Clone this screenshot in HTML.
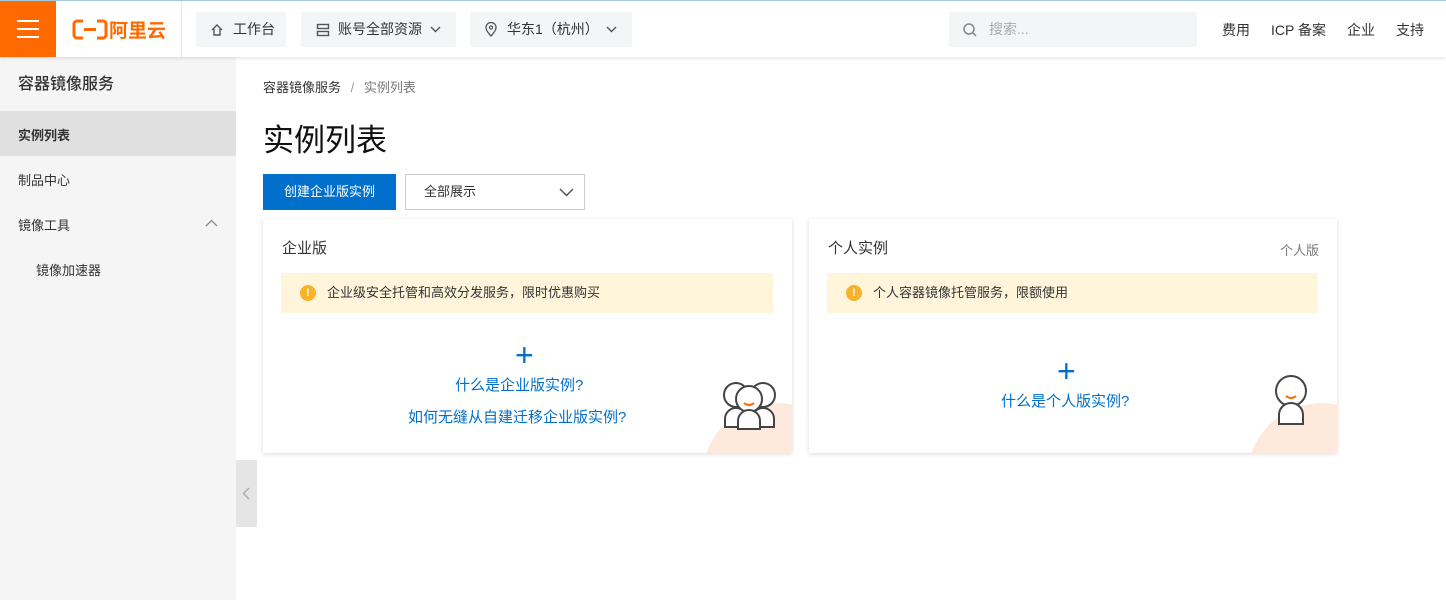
<!DOCTYPE html><html><head><meta charset="utf-8"><style>
*{box-sizing:border-box;margin:0;padding:0}
body{width:1446px;height:600px;overflow:hidden;font-family:"Liberation Sans","Noto Sans CJK SC",sans-serif;background:#fff;position:relative;color:#333}
.top{position:absolute;left:0;top:0;width:1446px;height:57px;background:#fff;border-top:1px solid #a8c8dc;box-shadow:0 1px 4px rgba(0,0,0,.12);z-index:3}
.ham{position:absolute;left:0;top:0;width:56px;height:56px;background:#ff6a00}
.ham i{position:absolute;left:17px;width:22px;height:2px;background:#fff}
.logo{position:absolute;left:56px;top:0;width:126px;height:56px;border-right:1px solid #e8e8e8}
.btn{position:absolute;top:11px;height:35px;background:#f4f5f7;border-radius:2px;font-size:14px;color:#333;line-height:35px}
.btn svg{position:absolute}
.side{position:absolute;left:0;top:57px;width:236px;height:543px;background:#f5f5f5}
.side div{font-size:13px;height:45px;line-height:45px;padding-left:18px;color:#333;position:relative}
a{color:#0070cc;text-decoration:none}
.card{position:absolute;top:219px;height:234px;background:#fff;box-shadow:0 1px 4px rgba(0,0,0,.15);overflow:hidden}
.card h3{position:absolute;left:19px;top:18px;font-size:15px;font-weight:normal;color:#333}
.warn{position:absolute;left:18px;right:19px;top:54px;height:40px;background:#fff5db;font-size:13px;line-height:40px;padding-left:46px;color:#333}
.warn:before{content:"!";position:absolute;left:19px;top:12px;width:16px;height:16px;border-radius:50%;background:#f7b32b;color:#fff;font-size:11px;line-height:16px;text-align:center;font-weight:bold}
.deco{position:absolute;right:-60px;bottom:-100px;width:150px;height:150px;border-radius:50%;background:#fdeadd}
.plus{position:absolute;font-size:32px;color:#0070cc;line-height:1}
</style></head><body>
<div class="top">
<div class="ham"><i style="top:19px"></i><i style="top:27px"></i><i style="top:35px"></i></div>
<div class="logo"><svg width="126" height="56"><rect x="18" y="20" width="14" height="17" rx="3" fill="none" stroke="#ff6a00" stroke-width="3"/><rect x="36" y="20" width="14" height="17" rx="3" fill="none" stroke="#ff6a00" stroke-width="3"/><rect x="27" y="18" width="14" height="21" fill="#fff"/><rect x="28" y="27" width="12" height="3" fill="#ff6a00"/><text x="53" y="36" font-size="19" font-weight="bold" fill="#ff6a00" font-family="Noto Sans CJK SC">阿里云</text></svg></div>
<div class="btn" style="left:196px;width:90px;padding-left:37px">工作台<svg style="left:14px;top:11px" width="14" height="14"><path d="M2 7L7 2l5 5M4 6v6h6V6" fill="none" stroke="#555" stroke-width="1.4"/></svg></div>
<div class="btn" style="left:301px;width:155px;padding-left:37px">账号全部资源<svg style="left:15px;top:11px" width="14" height="14"><rect x="1.5" y="1.5" width="11" height="4" fill="none" stroke="#555" stroke-width="1.4"/><rect x="1.5" y="8.5" width="11" height="4" fill="none" stroke="#555" stroke-width="1.4"/></svg><svg style="right:15px;top:13px" width="11" height="8"><path d="M1 2l4.5 4.5L10 2" fill="none" stroke="#555" stroke-width="1.4"/></svg></div>
<div class="btn" style="left:470px;width:162px;padding-left:37px">华东1（杭州）<svg style="left:14px;top:10px" width="14" height="16"><path d="M7 14s5-5 5-8.5a5 5 0 0 0-10 0C2 9 7 14 7 14z" fill="none" stroke="#555" stroke-width="1.3"/><circle cx="7" cy="5.5" r="1.6" fill="none" stroke="#555" stroke-width="1.2"/></svg><svg style="right:15px;top:13px" width="11" height="8"><path d="M1 2l4.5 4.5L10 2" fill="none" stroke="#555" stroke-width="1.4"/></svg></div>
<div class="btn" style="left:949px;width:248px;padding-left:40px;color:#aaa">搜索...<svg style="left:14px;top:11px" width="14" height="14"><circle cx="6" cy="6" r="5" fill="none" stroke="#888" stroke-width="1.5"/><line x1="10" y1="10" x2="13" y2="13" stroke="#888" stroke-width="1.5"/></svg></div>
<div style="position:absolute;top:19px;left:1222px;font-size:14px;color:#333">费用</div>
<div style="position:absolute;top:19px;left:1271px;font-size:14px;color:#333">ICP 备案</div>
<div style="position:absolute;top:19px;left:1347px;font-size:14px;color:#333">企业</div>
<div style="position:absolute;top:19px;left:1396px;font-size:14px;color:#333">支持</div>
</div>
<div class="side">
<div style="font-size:16px;height:54px;line-height:56px;font-weight:500">容器镜像服务</div>
<div style="background:#e0e0e0;font-weight:bold;line-height:50px">实例列表</div>
<div style="line-height:50px">制品中心</div>
<div style="line-height:50px">镜像工具<svg style="position:absolute;left:205px;top:18px" width="13" height="9"><path d="M1 7l5.5-5.5L12 7" fill="none" stroke="#888" stroke-width="1.3"/></svg></div>
<div style="padding-left:36px;line-height:50px">镜像加速器</div>
</div>
<div style="position:absolute;left:236px;top:460px;width:21px;height:67px;background:#e5e5e5"><svg style="position:absolute;left:6px;top:27px" width="8" height="13"><path d="M7 1L1.5 6.5 7 12" fill="none" stroke="#aaa" stroke-width="1.4"/></svg></div>
<div style="position:absolute;left:263px;top:77px;font-size:13px;color:#333">容器镜像服务 <span style="color:#999;margin:0 6px">/</span> <span style="color:#777">实例列表</span></div>
<div style="position:absolute;left:263px;top:115px;font-size:31px;color:#111">实例列表</div>
<div style="position:absolute;left:263px;top:174px;width:133px;height:36px;background:#0070cc;color:#fff;font-size:13px;line-height:36px;text-align:center">创建企业版实例</div>
<div style="position:absolute;left:405px;top:174px;width:180px;height:36px;border:1px solid #ccc;font-size:13px;line-height:34px;padding-left:18px">全部展示<svg style="position:absolute;right:10px;top:12px" width="15" height="10"><path d="M1 2l6.5 6.5L14 2" fill="none" stroke="#555" stroke-width="1.5"/></svg></div>
<div class="card" style="left:263px;width:529px">
<h3>企业版</h3><div class="warn">企业级安全托管和高效分发服务，限时优惠购买</div>
<div class="plus" style="left:252px;top:120px">+</div>
<a style="position:absolute;left:192px;top:155px;font-size:15px">什么是企业版实例?</a>
<a style="position:absolute;left:145px;top:187px;font-size:15px">如何无缝从自建迁移企业版实例?</a>
<div class="deco"></div>
<svg style="position:absolute;left:458px;top:160px" width="58" height="52"><g fill="#fff" stroke="#444" stroke-width="2"><circle cx="15" cy="16" r="12"/><path d="M4 48v-8a11 11 0 0 1 22 0v8z"/><circle cx="42" cy="16" r="12"/><path d="M31 48v-8a11 11 0 0 1 22 0v8z"/><circle cx="28" cy="20" r="13"/><path d="M17 50v-8a11 11 0 0 1 22 0v8z"/></g><path d="M23 24q5 4 10 0" stroke="#ff6a00" stroke-width="2" fill="none"/></svg>
</div>
<div class="card" style="left:809px;width:528px">
<h3>个人实例</h3><span style="position:absolute;right:18px;top:21px;font-size:13px;color:#777">个人版</span>
<div class="warn">个人容器镜像托管服务，限额使用</div>
<div class="plus" style="left:248px;top:136px">+</div>
<a style="position:absolute;left:192px;top:171px;font-size:15px">什么是个人版实例?</a>
<div class="deco"></div>
<svg style="position:absolute;left:462px;top:155px" width="40" height="55"><g fill="#fff" stroke="#444" stroke-width="2"><circle cx="20" cy="17" r="15"/><path d="M8 50v-9a12 12 0 0 1 24 0v9z"/></g><path d="M15 22q5 4 10 0" stroke="#ff6a00" stroke-width="2" fill="none"/></svg>
</div>
</body></html>
